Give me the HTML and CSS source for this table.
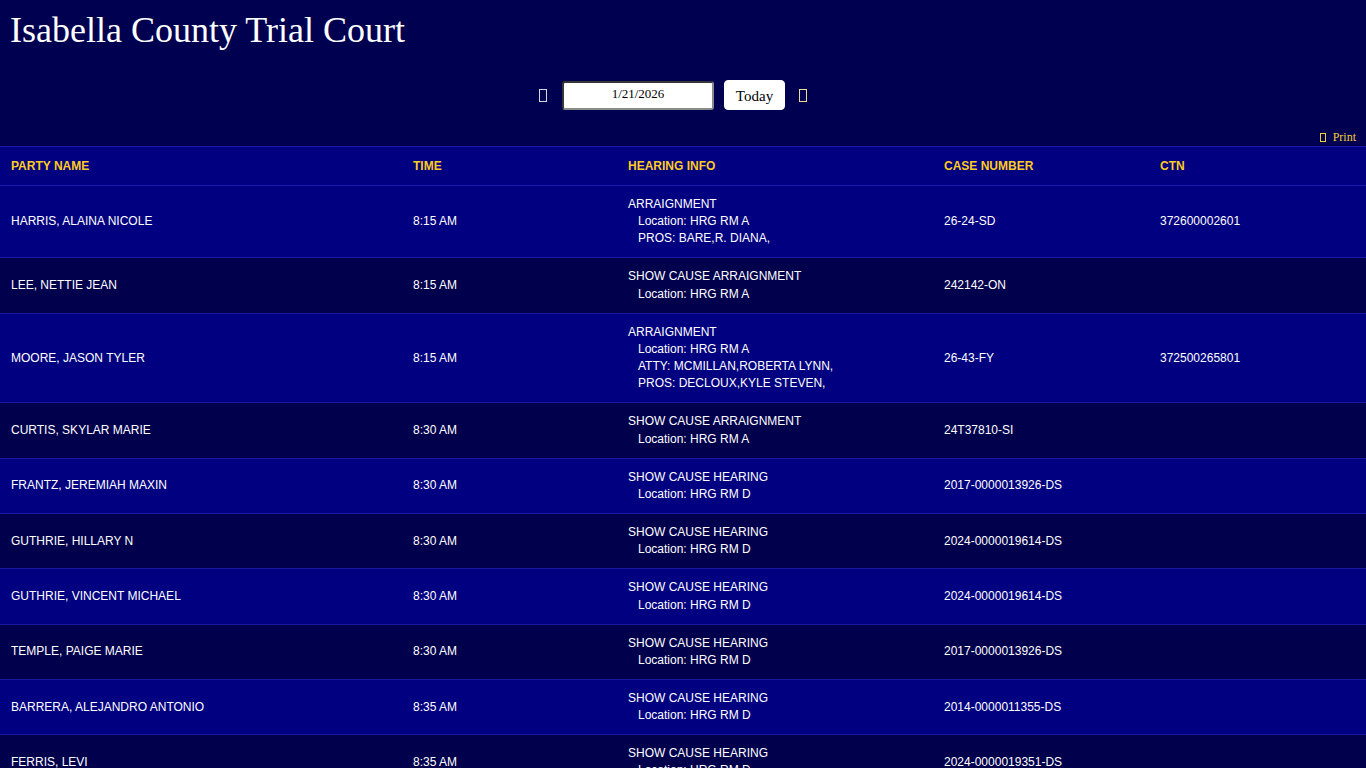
FILE: index.html
```html
<!DOCTYPE html>
<html>
<head>
<meta charset="utf-8">
<title>Isabella County Trial Court</title>
<link rel="stylesheet" href="styles.css">
</head>
<body>
<header class="top">
  <h1 class="title">Isabella County Trial Court</h1>
  <div class="datebar">
    <span class="glyph"></span>
    <input class="date" type="text" value="1/21/2026">
    <button class="today">Today</button>
    <span class="glyph"></span>
  </div>
  <div class="printbar"><span class="glyph small"></span><span class="print">Print</span></div>
</header>
<table class="docket">
  <colgroup>
    <col class="c1"><col class="c2"><col class="c3"><col class="c4"><col class="c5">
  </colgroup>
  <thead>
    <tr><th>PARTY NAME</th><th>TIME</th><th>HEARING INFO</th><th>CASE NUMBER</th><th>CTN</th></tr>
  </thead>
  <tbody>
    <tr><td>HARRIS, ALAINA NICOLE</td><td>8:15 AM</td><td><div>ARRAIGNMENT</div><div class="sub">Location: HRG RM A</div><div class="sub">PROS: BARE,R. DIANA,</div></td><td>26-24-SD</td><td>372600002601</td></tr>
    <tr><td>LEE, NETTIE JEAN</td><td>8:15 AM</td><td><div>SHOW CAUSE ARRAIGNMENT</div><div class="sub">Location: HRG RM A</div></td><td>242142-ON</td><td></td></tr>
    <tr><td>MOORE, JASON TYLER</td><td>8:15 AM</td><td><div>ARRAIGNMENT</div><div class="sub">Location: HRG RM A</div><div class="sub">ATTY: MCMILLAN,ROBERTA LYNN,</div><div class="sub">PROS: DECLOUX,KYLE STEVEN,</div></td><td>26-43-FY</td><td>372500265801</td></tr>
    <tr><td>CURTIS, SKYLAR MARIE</td><td>8:30 AM</td><td><div>SHOW CAUSE ARRAIGNMENT</div><div class="sub">Location: HRG RM A</div></td><td>24T37810-SI</td><td></td></tr>
    <tr><td>FRANTZ, JEREMIAH MAXIN</td><td>8:30 AM</td><td><div>SHOW CAUSE HEARING</div><div class="sub">Location: HRG RM D</div></td><td>2017-0000013926-DS</td><td></td></tr>
    <tr><td>GUTHRIE, HILLARY N</td><td>8:30 AM</td><td><div>SHOW CAUSE HEARING</div><div class="sub">Location: HRG RM D</div></td><td>2024-0000019614-DS</td><td></td></tr>
    <tr><td>GUTHRIE, VINCENT MICHAEL</td><td>8:30 AM</td><td><div>SHOW CAUSE HEARING</div><div class="sub">Location: HRG RM D</div></td><td>2024-0000019614-DS</td><td></td></tr>
    <tr><td>TEMPLE, PAIGE MARIE</td><td>8:30 AM</td><td><div>SHOW CAUSE HEARING</div><div class="sub">Location: HRG RM D</div></td><td>2017-0000013926-DS</td><td></td></tr>
    <tr><td>BARRERA, ALEJANDRO ANTONIO</td><td>8:35 AM</td><td><div>SHOW CAUSE HEARING</div><div class="sub">Location: HRG RM D</div></td><td>2014-0000011355-DS</td><td></td></tr>
    <tr><td>FERRIS, LEVI</td><td>8:35 AM</td><td><div>SHOW CAUSE HEARING</div><div class="sub">Location: HRG RM D</div></td><td>2024-0000019351-DS</td><td></td></tr>
  </tbody>
</table>
</body>
</html>
```

FILE: styles.css
```css
html, body {
  margin: 0;
  padding: 0;
  background: #000050;
  color: #ffffff;
}

.top {
  font-family: "Liberation Serif", "Times New Roman", serif;
}

.title {
  margin: 0;
  padding: 10px 10px 0 10px;
  font-size: 36px;
  font-weight: normal;
  line-height: 40px;
  color: #ffffff;
}

.datebar {
  display: flex;
  justify-content: center;
  align-items: center;
  margin-top: 30px;
  height: 30px;
  padding-right: 20px;
}

.glyph {
  display: inline-block;
  width: 8px;
  height: 13px;
  border: 1px solid #e8e2b0;
  box-sizing: border-box;
}

.datebar .glyph:first-child {
  margin-right: 15px;
  border-color: #d8d8e0;
}

.datebar .glyph:last-child {
  margin-left: 14px;
  border-color: #eadc90;
}

.date {
  width: 152px;
  height: 29px;
  box-sizing: border-box;
  border: 2px inset #8a8a8a;
  border-radius: 3px;
  background: #ffffff;
  color: #000000;
  font-family: "Liberation Serif", "Times New Roman", serif;
  font-size: 13px;
  text-align: center;
  padding: 0 0 2px 0;
}

.today {
  margin-left: 10px;
  width: 61px;
  height: 30px;
  box-sizing: border-box;
  border: 1px solid #ffffff;
  border-radius: 4px;
  background: #ffffff;
  color: #000000;
  font-family: "Liberation Serif", "Times New Roman", serif;
  font-size: 15px;
  padding: 2px 0 0 0;
}

.printbar {
  display: flex;
  justify-content: flex-end;
  align-items: center;
  gap: 7px;
  padding-right: 10px;
  margin-top: 19px;
  height: 16px;
  font-size: 12px;
  color: #f2cd3c;
}

.printbar .glyph.small {
  width: 6px;
  height: 9px;
  border-color: #f2cd3c;
}

.docket {
  width: 100%;
  border-collapse: collapse;
  font-family: "Liberation Sans", Arial, sans-serif;
  font-size: 12px;
  line-height: 17.15px;
  margin-top: 1px;
}

.c1 { width: 402px; }
.c2 { width: 215px; }
.c3 { width: 316px; }
.c4 { width: 216px; }
.c5 { width: 217px; }

.docket th {
  text-align: left;
  font-size: 12px;
  font-weight: bold;
  color: #ffcc22;
  background: #000080;
  padding: 11px 10px 10px 11px;
  border-top: 1px solid #1a1aa8;
  border-bottom: 1px solid #1a1aa8;
  height: 17px;
  line-height: 17px;
}

.docket td {
  vertical-align: middle;
  padding: 10px 10px 10px 11px;
  border-bottom: 1px solid #1a1aa0;
  color: #ffffff;
}

.docket tbody tr:nth-child(odd) {
  background: #000080;
}

.docket tbody tr:nth-child(even) {
  background: #00004c;
}

.sub {
  padding-left: 10px;
}
```
